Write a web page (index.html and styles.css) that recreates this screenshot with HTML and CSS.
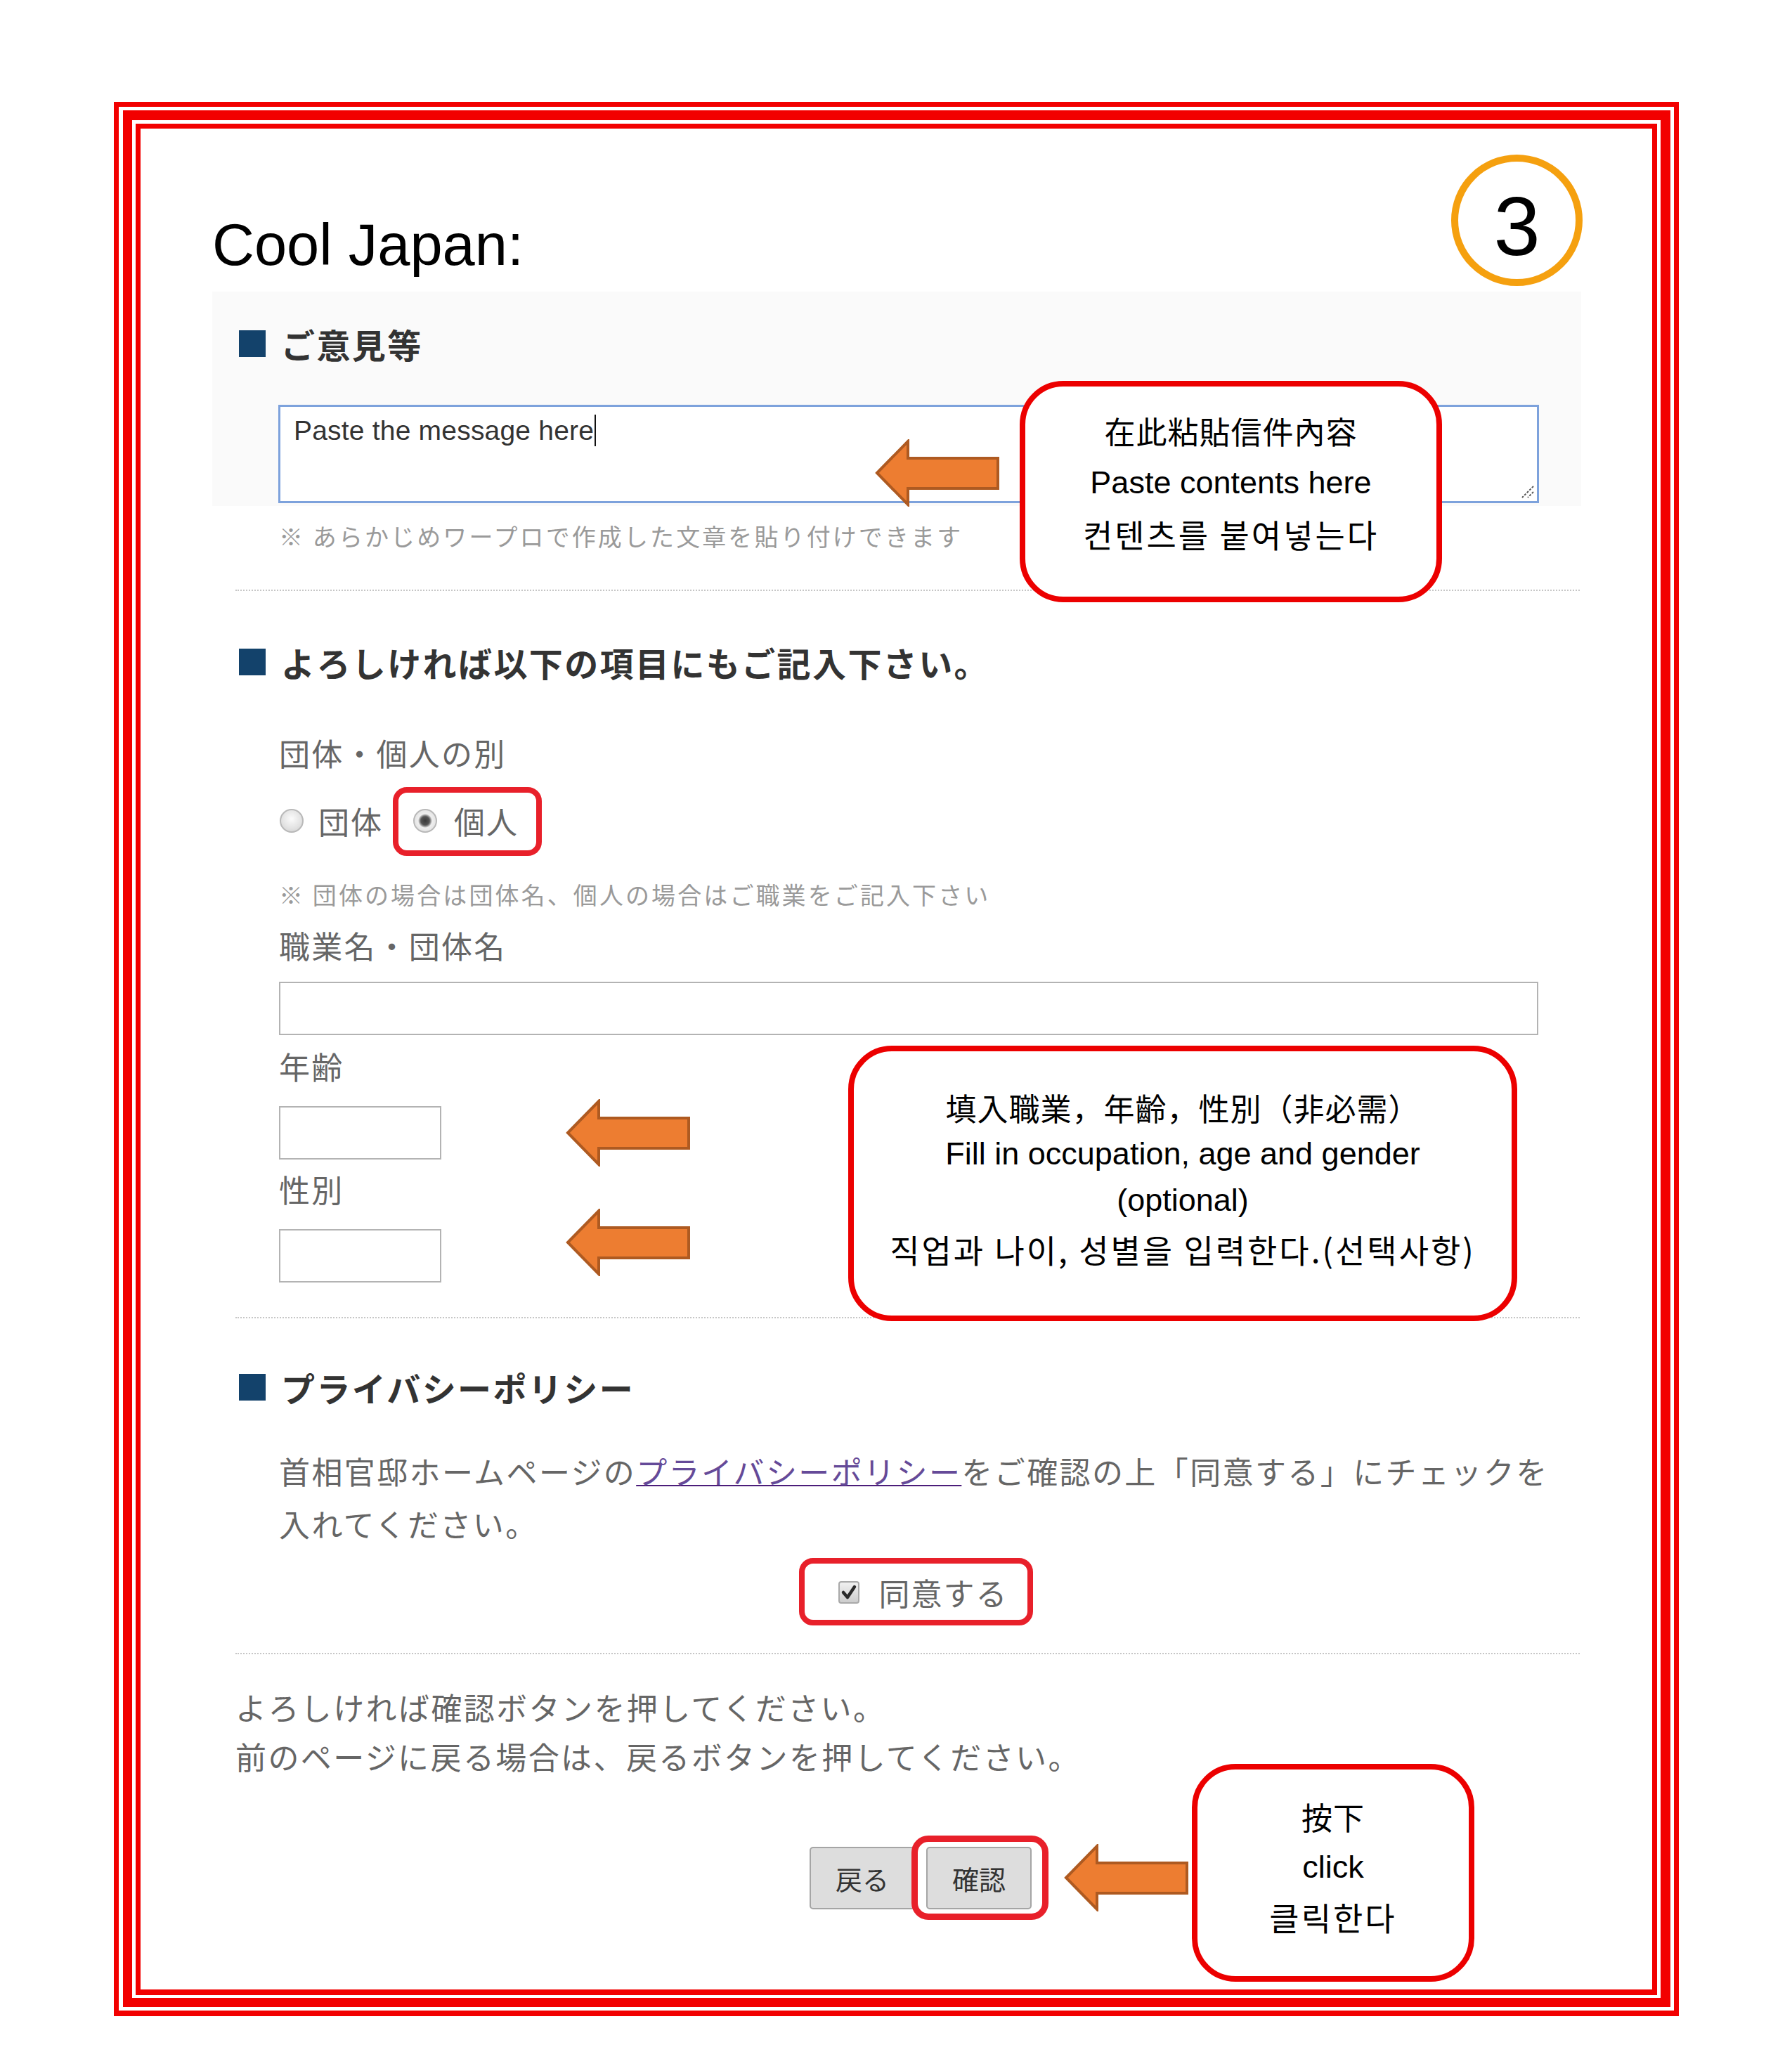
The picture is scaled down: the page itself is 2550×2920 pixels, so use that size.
FILE: index.html
```html
<!DOCTYPE html>
<html lang="ja">
<head>
<meta charset="utf-8">
<title>Cool Japan</title>
<link rel="stylesheet" href="styles.css">
</head>
<body>
<div class="page">
  <div class="frame-outer">
    <div class="frame-mid">
      <div class="frame-inner">
        <div class="title-row">
          <h1 class="title">Cool Japan:</h1>
          <div class="step">3</div>
        </div>

        <div class="form">
          <div class="panel">
            <h2 class="sec-h">ご意見等</h2>
            <div class="ta">Paste the message here<span class="caret"></span>
              <svg class="grip" width="22" height="22" viewBox="0 0 22 22"><path d="M20 4 L4 20 M20 12 L12 20" stroke="#555" stroke-width="2" stroke-dasharray="3 2" fill="none"/></svg>
            </div>
          </div>
          <p class="hint">※ あらかじめワープロで作成した文章を貼り付けできます</p>
          <div class="sep"></div>

          <h2 class="sec-h s2">よろしければ以下の項目にもご記入下さい。</h2>
          <p class="label l-type">団体・個人の別</p>
          <div class="radios">
            <span class="radio"></span><span class="rtext">団体</span>
            <span class="radio on"></span><span class="rtext">個人</span>
          </div>
          <p class="note">※ 団体の場合は団体名、個人の場合はご職業をご記入下さい</p>
          <p class="label l-job">職業名・団体名</p>
          <div class="input wide"></div>
          <p class="label l-age">年齢</p>
          <div class="input small"></div>
          <p class="label l-sex">性別</p>
          <div class="input small"></div>
          <div class="sep sep2"></div>

          <h2 class="sec-h s3">プライバシーポリシー</h2>
          <p class="para">首相官邸ホームページの<a class="link" href="#">プライバシーポリシー</a>をご確認の上「同意する」にチェックを入れてください。</p>
          <div class="agree">
            <span class="cb"><svg width="24" height="24" viewBox="0 0 24 24"><path d="M4 12 L10 19 L20 4" stroke="#2a2a2a" stroke-width="4.5" fill="none" stroke-linecap="round" stroke-linejoin="round"/></svg></span>
            <span class="agree-text">同意する</span>
          </div>
          <div class="sep sep3"></div>

          <p class="outro">よろしければ確認ボタンを押してください。<br>前のページに戻る場合は、戻るボタンを押してください。</p>
          <div class="buttons">
            <button class="btn">戻る</button>
            <button class="btn">確認</button>
          </div>
        </div>

        <!-- annotations -->
        <div class="hl hl-radio"></div>
        <div class="hl hl-check"></div>
        <div class="hl hl-btn"></div>

        <svg class="arrow a1" width="178" height="96" viewBox="0 0 178 96"><polygon points="3,48 47,3 47,27 175,27 175,70 47,70 47,93" fill="#ed7d31" stroke="#ae5a21" stroke-width="4"/></svg>
        <svg class="arrow a2" width="178" height="96" viewBox="0 0 178 96"><polygon points="3,48 47,3 47,27 175,27 175,70 47,70 47,93" fill="#ed7d31" stroke="#ae5a21" stroke-width="4"/></svg>
        <svg class="arrow a3" width="178" height="96" viewBox="0 0 178 96"><polygon points="3,48 47,3 47,27 175,27 175,70 47,70 47,93" fill="#ed7d31" stroke="#ae5a21" stroke-width="4"/></svg>
        <svg class="arrow a4" width="178" height="96" viewBox="0 0 178 96"><polygon points="3,48 47,3 47,27 175,27 175,70 47,70 47,93" fill="#ed7d31" stroke="#ae5a21" stroke-width="4"/></svg>

        <div class="callout c1">
          <div class="zh">在此粘貼信件內容</div>
          <div class="en">Paste contents here</div>
          <div class="ko">컨텐츠를 붙여넣는다</div>
        </div>
        <div class="callout c2">
          <div class="zh">填入職業，年齡，性別（非必需）</div>
          <div class="en">Fill in occupation, age and gender</div>
          <div class="en">(optional)</div>
          <div class="ko">직업과 나이, 성별을 입력한다.(선택사항)</div>
        </div>
        <div class="callout c3">
          <div class="zh">按下</div>
          <div class="en">click</div>
          <div class="ko">클릭한다</div>
        </div>
      </div>
    </div>
  </div>
</div>
</body>
</html>
```

FILE: styles.css
```css
* { box-sizing: border-box; }
html, body { margin: 0; padding: 0; background: #fff; }
body {
  width: 2550px;
  height: 2920px;
  font-family: "Noto Sans CJK JP", sans-serif;
  color: #333;
}
h1, h2, p { margin: 0; font-weight: normal; }

.page { padding: 145px 0 0 162px; }
.frame-outer {
  width: 2227px;
  border: 7px solid #f20000;
  border-bottom-width: 8px;
  padding: 5px 5px 5px 6px;
}
.frame-mid {
  border: 14px solid #f20000;
  border-left-width: 13px;
  border-bottom-width: 13px;
  padding: 5px 5px 4px 5px;
}
.frame-inner {
  position: relative;
  height: 2663px;
  border: 7px solid #f20000;
  border-bottom-width: 8px;
}

/* title */
.title-row {
  display: flex;
  justify-content: space-between;
  align-items: flex-start;
  padding: 37px 99px 0 102px;
}
.title {
  margin-top: 87px;
  font-family: "Liberation Sans", sans-serif;
  font-size: 83px;
  line-height: 84px;
  color: #000;
}
.step {
  width: 187px;
  height: 187px;
  border: 10px solid #f5a00f;
  border-radius: 50%;
  display: flex;
  align-items: center;
  justify-content: center;
  padding-top: 16px;
  font-family: "Liberation Sans", sans-serif;
  font-size: 119px;
  line-height: 119px;
  color: #000;
}

/* form */
.form { width: 1948px; margin: 8px 0 0 102px; }
.panel {
  background: #fafafa;
  padding: 46px 60px 4px 38px;
}
.sec-h {
  display: flex;
  align-items: center;
  gap: 22px;
  font-size: 48px;
  line-height: 56px;
  font-weight: 700;
  letter-spacing: 2.4px;
  color: #333;
}
.sec-h::before {
  content: "";
  flex: 0 0 38px;
  height: 38px;
  background: #13426b;
}
.s2 { margin-top: 73px; padding-left: 38px; }
.s3 { margin-top: 70px; padding-left: 38px; }

.ta {
  position: relative;
  margin: 59px 0 0 56px;
  width: 1794px;
  height: 140px;
  border: 3px solid #7da2dc;
  background: #fff;
  padding: 11px 19px;
  font-family: "Liberation Sans", sans-serif;
  font-size: 39px;
  line-height: 45px;
  letter-spacing: 0.2px;
  color: #333;
}
.caret {
  display: inline-block;
  width: 2px;
  height: 45px;
  margin-left: 1px;
  background: #111;
  vertical-align: -9px;
}
.grip { position: absolute; right: 3px; bottom: 3px; }

.hint, .note {
  margin: 23px 0 0 95px;
  font-size: 34px;
  line-height: 40px;
  letter-spacing: 3.1px;
  color: #9a9a9a;
}
.note { margin-top: 57px; }

.sep {
  margin: 56px 0 0 33px;
  width: 1913px;
  border-top: 2px dotted #c6c6c6;
}
.sep2 { margin-top: 49px; }
.sep3 { margin-top: 58px; }

.label {
  margin: 73px 0 0 95px;
  font-size: 44px;
  line-height: 56px;
  letter-spacing: 2.2px;
  color: #666;
}
.l-job { margin-top: 24px; }
.l-age { margin-top: 16px; }
.l-sex { margin-top: 14px; }

.radios {
  display: flex;
  align-items: center;
  margin: 41px 0 0 96px;
  height: 56px;
  font-size: 44px;
  line-height: 56px;
  letter-spacing: 2px;
  color: #666;
}
.radio {
  flex: 0 0 34px;
  height: 34px;
  border-radius: 50%;
  border: 2px solid #b9b9b9;
  background: radial-gradient(circle at 50% 40%, #fbfbfb 0, #e4e4e4 55%, #cfcfcf 100%);
}
.radio.on {
  background: radial-gradient(circle at 50% 50%, #3a3a3a 0, #555 6px, #9a9a9a 8px, #efefef 10px, #d9d9d9 100%);
}
.rtext { margin-left: 21px; }
.rtext + .radio { margin-left: 43px; }
.radio.on + .rtext { margin-left: 24px; }

.input {
  margin: 24px 0 0 95px;
  height: 76px;
  border: 2px solid #b3b3b3;
  background: #fff;
}
.input.wide { width: 1792px; }
.input.small { width: 231px; margin-top: 29px; }

.para {
  margin: 54px 0 0 95px;
  width: 1820px;
  font-size: 44px;
  line-height: 75px;
  letter-spacing: 2.4px;
  color: #666;
}
.link {
  color: #654a98;
  text-decoration: underline;
  text-decoration-color: #4b1d7a;
  text-decoration-thickness: 2px;
}

.agree {
  display: flex;
  align-items: center;
  justify-content: center;
  margin: 32px 0 0 33px;
  width: 1913px;
  padding-left: 44px;
  height: 56px;
  font-size: 44px;
  line-height: 56px;
  letter-spacing: 2px;
  color: #666;
}
.cb {
  display: flex;
  align-items: center;
  justify-content: center;
  width: 30px;
  height: 32px;
  border: 2px solid #a9a9a9;
  border-radius: 4px;
  background: linear-gradient(#f0f0f0, #cdcdcd);
}
.agree-text { margin-left: 28px; }

.outro {
  margin: 40px 0 0 33px;
  font-size: 44px;
  line-height: 70px;
  letter-spacing: 2.4px;
  color: #666;
}
.buttons {
  display: flex;
  justify-content: center;
  gap: 16px;
  margin: 94px 0 0 33px;
  width: 1913px;
  padding-left: 37px;
}
.btn {
  width: 150px;
  height: 89px;
  border: 2px solid #a5a5a5;
  border-radius: 5px;
  background: #dddddd;
  font-family: "Noto Sans CJK JP", sans-serif;
  font-size: 38px;
  color: #333;
  padding: 0;
}

/* annotations */
.hl {
  position: absolute;
  border: 8px solid #e8202a;
  border-radius: 20px;
}
.hl-radio { left: 359px; top: 937px; width: 212px; height: 98px; }
.hl-check { left: 937px; top: 2034px; width: 333px; height: 96px; }
.hl-btn { left: 1097px; top: 2429px; width: 195px; height: 120px; border-width: 9px; border-radius: 24px; }

.arrow { position: absolute; }
.a1 { left: 1045px; top: 442px; }
.a2 { left: 605px; top: 1381px; }
.a3 { left: 605px; top: 1537px; }
.a4 { left: 1314px; top: 2441px; }

.callout {
  position: absolute;
  border: 8px solid #ec0000;
  border-radius: 62px;
  background: #fff;
  display: flex;
  flex-direction: column;
  align-items: center;
  justify-content: center;
  text-align: center;
  color: #000;
  font-size: 44px;
  white-space: nowrap;
}
.callout .zh { font-family: "Noto Sans CJK TC", sans-serif; letter-spacing: 1px; }
.callout .en { font-family: "Liberation Sans", sans-serif; font-size: 45px; }
.callout .ko { font-family: "Noto Sans CJK KR", sans-serif; font-size: 46px; letter-spacing: 3px; }

.c1 { left: 1251px; top: 359px; width: 601px; height: 315px; padding-bottom: 27px; line-height: 73px; }
.c2 { left: 1007px; top: 1305px; width: 952px; height: 392px; padding-bottom: 15px; line-height: 66px; }
.c2 .ko { margin-top: 3px; }
.c3 { left: 1496px; top: 2327px; width: 402px; height: 310px; padding-bottom: 17px; line-height: 71px; }
```
